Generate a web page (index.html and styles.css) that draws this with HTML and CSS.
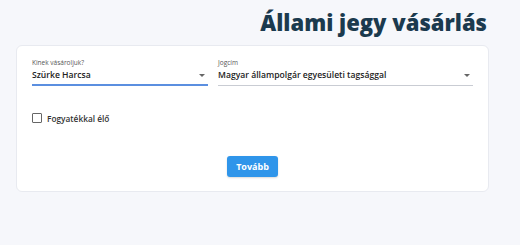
FILE: index.html
```html
<!DOCTYPE html>
<html lang="hu">
<head>
  <meta charset="UTF-8" />
  <title>Állami jegy vásárlás</title>
  <link rel="stylesheet" href="styles.css">
</head>
<body>
  <div class="wrap">
    <h1 class="title">Állami jegy vásárlás</h1>

    <div class="card">
      <div class="fields">
        <div class="field active">
          <label>Kinek vásároljuk?</label>
          <div class="select">
            <span>Szürke Harcsa</span>
            <span class="caret"></span>
          </div>
        </div>
        <div class="field">
          <label>Jogcím</label>
          <div class="select">
            <span>Magyar állampolgár egyesületi tagsággal</span>
            <span class="caret"></span>
          </div>
        </div>
      </div>

      <label class="check">
        <span class="box"></span>
        Fogyatékkal élő
      </label>

      <div class="actions">
        <button class="btn">Tovább</button>
      </div>
    </div>
  </div>
</body>
</html>
```

FILE: styles.css
```css
body {
  margin: 0;
  background-color: #f6f7fb;
  font-family: "Open Sans", Arial, sans-serif;
  color: #222;
}
.wrap {
  width: 473px;
  padding: 6px 0 0 16px;
}
.title {
  margin: 0 2px 7px 0;
  text-align: right;
  font-size: 22px;
  font-weight: 800;
  line-height: 32px;
  color: #1b3a4e;
}
.card {
  background-color: white;
  border: 1px solid #e8eaf0;
  border-radius: 6px;
  padding: 12px 15px 14px 15px;
}
.fields {
  display: grid;
  grid-template-columns: 176px 1fr;
  gap: 10px;
}
.field label {
  display: block;
  font-size: 6.5px;
  line-height: 10px;
  color: #555;
}
.select {
  display: flex;
  align-items: center;
  justify-content: space-between;
  height: 12px;
  padding: 1px 0 4px;
  border-bottom: 1px solid #c9ccd3;
  font-size: 8.6px;
  font-weight: 600;
  color: #222;
}
.field.active .select {
  border-bottom: 2px solid #5b8fe0;
  padding-bottom: 3px;
}
.caret {
  width: 0;
  height: 0;
  margin-right: 3px;
  border-left: 3px solid transparent;
  border-right: 3px solid transparent;
  border-top: 3px solid #666;
}
.check {
  display: flex;
  align-items: center;
  gap: 5px;
  height: 12px;
  margin-top: 26px;
  font-size: 8.3px;
  font-weight: 600;
  color: #333;
}
.box {
  width: 8px;
  height: 8px;
  border: 1.5px solid #666;
  border-radius: 1px;
}
.actions {
  display: flex;
  justify-content: center;
  margin-top: 32px;
}
.btn {
  width: 51px;
  height: 21px;
  background-color: #2f95ea;
  color: white;
  border: none;
  border-radius: 3px;
  font-family: inherit;
  font-size: 9px;
  font-weight: 700;
  box-shadow: 0 1px 2px rgba(0,0,0,0.15);
}
```
